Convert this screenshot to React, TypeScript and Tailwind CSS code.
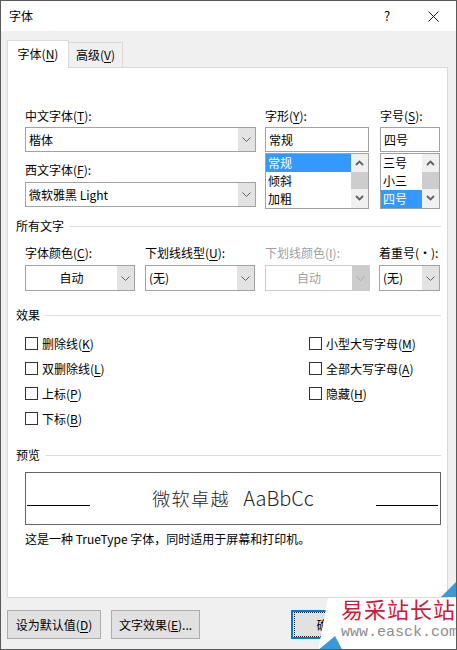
import React from 'react';

const Chevron = ({ color = '#5f5f5f' }: { color?: string }) => (
  <svg width="9" height="5" viewBox="0 0 9 5">
    <path d="M0.5 0.5 L4.5 4.5 L8.5 0.5" fill="none" stroke={color} strokeWidth="1" />
  </svg>
);

const ArrowUp = () => (
  <svg width="9" height="6" viewBox="0 0 9 6">
    <path d="M1 5 L4.5 1.5 L8 5" fill="none" stroke="#606060" strokeWidth="1.8" />
  </svg>
);

const ArrowDown = () => (
  <svg width="9" height="6" viewBox="0 0 9 6">
    <path d="M1 1 L4.5 4.5 L8 1" fill="none" stroke="#606060" strokeWidth="1.8" />
  </svg>
);

// text with underlined accelerator letter, e.g. 中文字体(T):
const Acc = ({ pre, k, post = '' }: { pre: string; k: string; post?: string }) => (
  <span>
    {pre}(<u className="underline-offset-2">{k}</u>){post}
  </span>
);

type ComboProps = {
  value: string;
  w: string;
  h?: string;
  center?: boolean;
  disabled?: boolean;
};

const Combo = ({ value, w, h = 'h-[26px]', center, disabled }: ComboProps) => (
  <div
    className={`${w} ${h} flex border ${disabled ? 'border-[#cccccc] text-[#a0a0a0]' : 'border-[#a2a2a2]'} bg-white`}
  >
    <div className={`flex-1 flex items-center ${center ? 'justify-center' : 'pl-[3px]'}`}>{value}</div>
    <div
      className={`w-[17px] flex items-center justify-center ${disabled ? 'bg-[#cccccc]' : 'bg-[#e3e3e3]'}`}
    >
      <Chevron color={disabled ? '#a8a8a8' : '#5f5f5f'} />
    </div>
  </div>
);

const ListBox = ({ items, selected, w }: { items: string[]; selected: number; w: string }) => (
  <div className={`${w} h-[56px] mt-px flex border border-[#a2a2a2] bg-white overflow-hidden`}>
    <div className="flex-1 flex flex-col">
      {items.map((it, i) => (
        <div
          key={it}
          className={`h-[18px] flex items-center pl-[2px] ${i === selected ? 'bg-[#3399ff] text-white' : ''}`}
        >
          {it}
        </div>
      ))}
    </div>
    <div className="w-[17px] flex flex-col bg-[#f0f0f0]">
      <div className="h-[18px] flex items-center justify-center">
        <ArrowUp />
      </div>
      <div className="h-[17px] bg-[#cdcdcd]" />
      <div className="h-[18px] flex items-center justify-center">
        <ArrowDown />
      </div>
    </div>
  </div>
);

const Section = ({ title, className = '' }: { title: string; className?: string }) => (
  <div className={`flex items-center h-[16px] ${className}`}>
    <span>{title}</span>
    <div className="flex-1 h-px bg-[#dcdcdc] ml-[5px]" />
  </div>
);

const Check = ({ pre, k }: { pre: string; k: string }) => (
  <div className="h-[25px] flex items-center">
    <div className="w-[13px] h-[13px] border border-[#333333] bg-white" />
    <span className="ml-[4px]">
      <Acc pre={pre} k={k} />
    </span>
  </div>
);

const Button = ({ children, w, focused }: { children: React.ReactNode; w: string; focused?: boolean }) => (
  <div
    className={`${w} h-[29px] flex items-center justify-center bg-[#e1e1e1] ${focused ? 'border-2 border-[#0078d7]' : 'border border-[#adadad]'}`}
  >
    {focused ? (
      <div className="w-full h-full m-px border border-dotted border-[#222] flex items-center justify-center">
        {children}
      </div>
    ) : (
      children
    )}
  </div>
);

export default function App() {
  return (
    <div className="relative w-[457px] h-[650px] border border-[#5a5a5a] bg-[#f0f0f0] text-[12px] leading-[16px] text-black font-['Noto_Sans_CJK_SC','Liberation_Sans',sans-serif] overflow-hidden">
      {/* Title bar */}
      <div className="h-[30px] bg-white flex items-center">
        <span className="pl-[8px] flex-1">字体</span>
        <div className="w-[46px] h-full flex items-center justify-center text-[13px]">?</div>
        <div className="w-[46px] h-full flex items-center justify-center">
          <svg width="11" height="11" viewBox="0 0 11 11">
            <path d="M0.5 0.5 L10.5 10.5 M10.5 0.5 L0.5 10.5" stroke="#111" strokeWidth="1" />
          </svg>
        </div>
      </div>

      <div className="pl-[6px] pt-[9px]">
        {/* Tabs */}
        <div className="flex items-end h-[27px]">
          <div className="relative z-10 w-[62px] h-[28px] -mb-px bg-white border border-b-0 border-[#d9d9d9] flex items-center justify-center pb-px">
            <Acc pre="字体" k="N" />
          </div>
          <div className="w-[55px] h-[25px] -ml-px bg-[#f0f0f0] border border-b-0 border-[#d9d9d9] flex items-center justify-center">
            <Acc pre="高级" k="V" />
          </div>
        </div>

        {/* Panel */}
        <div className="w-[441px] h-[531px] bg-white border border-[#d9d9d9] pl-[8px] pr-[6px] pt-[40px]">
          {/* Font selection */}
          <div className="flex ml-[9px]">
            <div className="w-[231px] flex flex-col">
              <Acc pre="中文字体" k="T" post=":" />
              <div className="mt-[3px]">
                <Combo value="楷体" w="w-[231px]" h="h-[25px]" />
              </div>
              <div className="mt-[10px]">
                <Acc pre="西文字体" k="F" post=":" />
              </div>
              <div className="mt-[4px]">
                <Combo value="微软雅黑 Light" w="w-[231px]" h="h-[25px]" />
              </div>
            </div>
            <div className="w-[104px] ml-[9px] flex flex-col">
              <Acc pre="字形" k="Y" post=":" />
              <div className="mt-[3px] h-[25px] border border-[#a2a2a2] flex items-center pl-[3px]">常规</div>
              <ListBox items={['常规', '倾斜', '加粗']} selected={0} w="w-[104px]" />
            </div>
            <div className="w-[60px] ml-[11px] flex flex-col">
              <Acc pre="字号" k="S" post=":" />
              <div className="mt-[3px] h-[25px] border border-[#a2a2a2] flex items-center pl-[3px]">四号</div>
              <ListBox items={['三号', '小三', '四号']} selected={2} w="w-[60px]" />
            </div>
          </div>

          {/* All text */}
          <Section title="所有文字" className="mt-[9px]" />
          <div className="flex ml-[9px] mt-[11px]">
            <div className="w-[110px]">
              <Acc pre="字体颜色" k="C" post=":" />
              <div className="mt-[4px]">
                <Combo value="自动" w="w-[110px]" center />
              </div>
            </div>
            <div className="w-[110px] ml-[10px]">
              <Acc pre="下划线线型" k="U" post=":" />
              <div className="mt-[4px]">
                <Combo value="(无)" w="w-[110px]" />
              </div>
            </div>
            <div className="w-[105px] ml-[10px]">
              <span className="text-[#a0a0a0]">
                <Acc pre="下划线颜色" k="I" post=":" />
              </span>
              <div className="mt-[4px]">
                <Combo value="自动" w="w-[105px]" center disabled />
              </div>
            </div>
            <div className="w-[61px] ml-[9px]">
              <span>着重号(·):</span>
              <div className="mt-[4px]">
                <Combo value="(无)" w="w-[61px]" />
              </div>
            </div>
          </div>

          {/* Effects */}
          <Section title="效果" className="mt-[16px]" />
          <div className="grid grid-cols-[284px_1fr] ml-[9px] mt-[8px]">
            <div className="flex flex-col">
              <Check pre="删除线" k="K" />
              <Check pre="双删除线" k="L" />
              <Check pre="上标" k="P" />
              <Check pre="下标" k="B" />
            </div>
            <div className="flex flex-col">
              <Check pre="小型大写字母" k="M" />
              <Check pre="全部大写字母" k="A" />
              <Check pre="隐藏" k="H" />
            </div>
          </div>

          {/* Preview */}
          <Section title="预览" className="mt-[16px]" />
          <div className="relative ml-[9px] mt-[9px] w-[416px] h-[53px] border border-[#646464] flex items-center justify-center pb-[2px]">
            <div className="absolute left-px top-[32px] w-[63px] h-px bg-black" />
            <div className="absolute right-[2px] top-[32px] w-[62px] h-px bg-black" />
            <span className="text-[18px] leading-[24px] font-light tracking-[1.5px] text-[#222]">微软卓越</span>
            <span className="ml-[13px] text-[20px] leading-[24px] font-light text-[#222]">AaBbCc</span>
          </div>
          <div className="ml-[9px] mt-[6px]">这是一种 TrueType 字体，同时适用于屏幕和打印机。</div>
        </div>

        {/* Buttons */}
        <div className="flex mt-[12px]">
          <Button w="w-[94px]">
            <Acc pre="设为默认值" k="D" />
          </Button>
          <div className="ml-[10px]">
            <Button w="w-[89px]">
              <span>
                文字效果(<u>E</u>)...
              </span>
            </Button>
          </div>
          <div className="ml-[91px]">
            <Button w="w-[75px]" focused>
              确定
            </Button>
          </div>
        </div>
      </div>

      {/* Watermark overlay */}
      <svg className="absolute left-[314px] top-[577px]" width="143" height="73" viewBox="0 0 143 73">
        <polygon points="13,20 143,20 143,73 3,73" fill="#ffffff" />
        <polygon points="126,19 143,2 143,19" fill="#3a9ad9" />
        <polygon points="2,73 20,58 28,73" fill="#3a9ad9" />
      </svg>
      <span className="absolute left-[340px] top-[595px] text-[22px] leading-[25px] tracking-[1px] text-[#cc1a3a] whitespace-nowrap">
        易采站长站
      </span>
      <span className="absolute left-[340px] top-[624px] text-[15px] leading-[16px] text-[#8c8c8c] font-['Liberation_Mono',monospace] whitespace-nowrap">
        www.easck.com
      </span>
    </div>
  );
}
